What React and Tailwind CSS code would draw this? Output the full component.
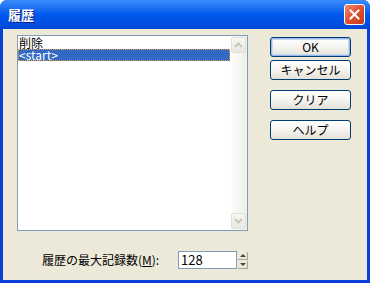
import React from 'react';

const font = { fontFamily: '"MS UI Gothic", "Noto Sans CJK JP", "Liberation Sans", sans-serif' };

function XpButton({ children, primary, className = '' }) {
  return (
    <div
      className={`w-[81px] h-[20px] rounded-[3px] border border-[#003c74] bg-gradient-to-b from-white via-[#f5f4ef] to-[#e3e1d6] flex items-center justify-center text-[12px] text-black leading-none ${
        primary ? 'shadow-[inset_0_0_0_1px_#98b8ea,inset_0_0_0_2px_#c6d8f6]' : ''
      } ${className}`}
    >
      {children}
    </div>
  );
}

function ScrollArrow({ up }) {
  return (
    <div className="w-[15px] h-[16px] rounded-[2px] border border-[#e2e0d6] bg-gradient-to-b from-[#f8f7f3] to-[#e9e7de] flex items-center justify-center">
      <svg width="9" height="6" viewBox="0 0 9 6">
        <path
          d={up ? 'M1 5 L4.5 1.5 L8 5' : 'M1 1 L4.5 4.5 L8 1'}
          stroke="#c9c7bc"
          strokeWidth="2"
          fill="none"
        />
      </svg>
    </div>
  );
}

function SpinButton({ up }) {
  return (
    <div className="w-[10px] h-[8px] bg-[#ece9d8] border-r border-b border-[#a5a394] flex items-center justify-center">
      <svg width="6" height="3" viewBox="0 0 6 3">
        <path d={up ? 'M0 3 L3 0 L6 3 Z' : 'M0 0 L6 0 L3 3 Z'} fill="#444" />
      </svg>
    </div>
  );
}

export default function App() {
  return (
    <div style={font} className="w-[370px] h-[283px] flex flex-col bg-[#0a3fd6] rounded-t-[7px] overflow-hidden select-none">
      {/* Title bar */}
      <div className="h-[29px] flex items-center justify-between pl-[8px] pr-[5px] bg-gradient-to-b from-[#3a8cf8] via-[#0058ee] to-[#0149d9]">
        <span className="text-white font-bold text-[13px] [text-shadow:1px_1px_0_#0a1e80]">履歴</span>
        <div className="w-[21px] h-[21px] rounded-[3px] border border-white bg-gradient-to-br from-[#f08a6c] via-[#e0502c] to-[#c4391a] flex items-center justify-center">
          <svg width="11" height="11" viewBox="0 0 11 11">
            <path d="M1.5 1.5 L9.5 9.5 M9.5 1.5 L1.5 9.5" stroke="white" strokeWidth="2" strokeLinecap="square" />
          </svg>
        </div>
      </div>

      {/* Client area */}
      <div className="flex-1 mx-[3px] mb-[3px] bg-[#ece9d8] flex">
        <div className="pl-[14px] pt-[6px] flex flex-col">
          {/* List box */}
          <div className="w-[231px] h-[196px] border border-[#7f9db9] bg-white flex">
            <div className="flex-1 flex flex-col pt-[1px] text-[12px] leading-none">
              <div className="h-[12px] pl-[1px] flex items-center text-black">削除</div>
              <div className="h-[12px] pl-[1px] flex items-center bg-[#316ac5] text-white outline outline-1 outline-dotted outline-[#f0a030] -outline-offset-1">&lt;start&gt;</div>
            </div>
            <div className="w-[17px] flex flex-col justify-between p-[1px] bg-gradient-to-r from-[#fefefe] to-[#f0efe8]">
              <ScrollArrow up />
              <ScrollArrow />
            </div>
          </div>

          {/* Max count row */}
          <div className="flex items-center mt-[20px]">
            <span className="ml-[25px] w-[136px] text-[12px] text-black">
              履歴の最大記録数(<span className="underline">M</span>):
            </span>
            <div className="w-[59px] h-[18px] border border-[#7f9db9] bg-white flex items-center pl-[2px] text-[13px] text-black">128</div>
            <div className="flex flex-col gap-[1px] ml-[1px]">
              <SpinButton up />
              <SpinButton />
            </div>
          </div>
        </div>

        {/* Buttons */}
        <div className="ml-[22px] pt-[8px] flex flex-col">
          <XpButton primary>OK</XpButton>
          <XpButton className="mt-[3px]">キャンセル</XpButton>
          <XpButton className="mt-[10px]">クリア</XpButton>
          <XpButton className="mt-[10px]">ヘルプ</XpButton>
        </div>
      </div>
    </div>
  );
}
